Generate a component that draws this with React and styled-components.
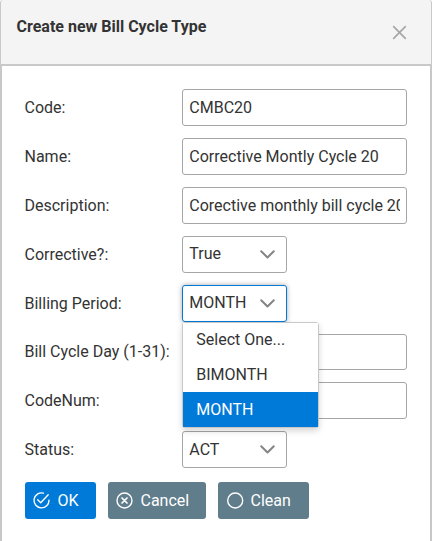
import React from "react";
import styled, { createGlobalStyle, css } from "styled-components";

const GlobalStyle = createGlobalStyle`
  *, *::before, *::after { box-sizing: border-box; }
  body {
    margin: 0;
    background: #fff;
    color: #333;
    font-family: Roboto, "Liberation Sans", sans-serif;
    font-size: 16px;
    line-height: 19px;
    overflow: hidden;
  }
`;

const Dialog = styled.div`
  display: flex;
  flex-direction: column;
  width: 432px;
  height: 541px;
`;

const Header = styled.header`
  display: flex;
  justify-content: space-between;
  height: 64px;
  padding: 17px 24px 0 15.5px;
  background: #f4f4f4;
  border: solid #c8c8c8;
  border-width: 0 1px;
  border-radius: 3px 3px 0 0;
`;

const Title = styled.h1`
  margin: 0;
  font-size: 16px;
  line-height: 19px;
  font-weight: 700;
  color: #333;
`;

const CloseButton = styled.button`
  display: flex;
  width: 15px;
  height: 15px;
  margin-top: 8px;
  padding: 0;
  border: 0;
  background: none;
  color: #a6a6a6;
`;

const Body = styled.main`
  flex: 1;
  padding: 23px 23px 0;
  border: 2px solid #c8c8c8;
  border-bottom: 0;
`;

const Form = styled.form`
  display: grid;
  grid-template-columns: 157px 1fr;
  grid-template-rows: repeat(5, 49px) 48px 49px 37px;
`;

const Label = styled.label`
  padding-top: ${(p) => (p.$raised ? 8 : 9)}px;
  margin-left: -0.5px;
  white-space: nowrap;
`;

const control = css`
  height: 37px;
  background: #fff;
  border: 1px solid #a6a6a6;
  border-radius: 3px;
  color: #333;
  font: inherit;
`;

const Input = styled.input`
  ${control}
  width: 225px;
  height: ${(p) => (p.$short ? 36 : 37)}px;
  padding: 0 6px 0 6.3px;
  outline: 0;
`;

const SelectWrap = styled.div`
  position: relative;
  width: 105px;
  height: 37px;
`;

const Select = styled.div`
  ${control}
  display: flex;
  align-items: center;
  justify-content: space-between;
  padding: 0 11px ${(p) => (p.$lowered ? 0 : 2)}px 6.3px;
  ${(p) =>
    p.$open &&
    css`
      border-color: #007ad9;
      box-shadow: 0 0 5px #a6a6a6;
    `}
`;

const Menu = styled.ul`
  position: absolute;
  z-index: 1;
  top: 37px;
  left: 0;
  width: 137px;
  height: 106px;
  margin: 0;
  padding: 0;
  list-style: none;
  background: #fff;
  border: 1px solid #c8c8c8;
  border-radius: 3px;
  box-shadow: 0 3px 6px rgba(0, 0, 0, 0.16);
`;

const Option = styled.li`
  height: ${(p) => (p.$first ? 34 : 35)}px;
  padding: ${(p) => (p.$first ? 7 : 8)}px 13.3px;
  color: ${(p) => (p.$selected ? "#fff" : "#333")};
  background: ${(p) => (p.$selected ? "#007ad9" : "#fff")};
`;

const Actions = styled.div`
  display: flex;
  gap: 12px;
  margin-top: 14px;
`;

const Button = styled.button`
  display: flex;
  align-items: center;
  gap: 7.5px;
  width: ${(p) => p.$width}px;
  height: 37px;
  padding: 0 0 0 8px;
  border: 0;
  border-radius: 3px;
  background: ${(p) => (p.$primary ? "#007ad9" : "#607d8b")};
  color: #fff;
  font: inherit;
`;

const Icon = styled.svg`
  flex: none;
  overflow: visible;
  fill: none;
  stroke: currentColor;
  stroke-width: ${(p) => p.$weight || 1.4};
  stroke-linecap: round;
  stroke-linejoin: round;
`;

const Chevron = styled(Icon)`
  margin-top: ${(p) => (p.$lowered ? 0 : 1)}px;
  color: #848484;
`;

const CheckIcon = () => (
  <Icon width="17" height="17" viewBox="0 0 17 17">
    <path d="M10.4 1.1A7.5 7.5 0 1 0 16 8.2M4.7 7.7l3 3L15.2 2.7" />
  </Icon>
);

const CancelIcon = () => (
  <Icon width="17" height="17" viewBox="0 0 17 17">
    <circle cx="8.5" cy="8.5" r="7.5" />
    <path d="m6 6 5 5m0-5-5 5" strokeWidth="1.7" />
  </Icon>
);

const CircleIcon = () => (
  <Icon width="17" height="17" viewBox="0 0 17 17">
    <circle cx="9.2" cy="8.5" r="7.5" />
  </Icon>
);

const options = ["Select One...", "BIMONTH", "MONTH"];

function Dropdown({ value, open, lowered }) {
  return (
    <SelectWrap>
      <Select $open={open} $lowered={lowered}>
        <span>{value}</span>
        <Chevron
          width="15"
          height="9"
          viewBox="0 0 15 9"
          $weight={2}
          $lowered={lowered}
        >
          <path d="m1.2 1.2 6.3 6.3 6.3-6.3" />
        </Chevron>
      </Select>
      {open && (
        <Menu>
          {options.map((o, i) => (
            <Option key={o} $first={i === 0} $selected={o === value}>
              {o}
            </Option>
          ))}
        </Menu>
      )}
    </SelectWrap>
  );
}

export default function App() {
  return (
    <>
      <GlobalStyle />
      <Dialog>
        <Header>
          <Title>Create new Bill Cycle Type</Title>
          <CloseButton aria-label="Close">
            <Icon width="15" height="15" viewBox="0 0 15 15" $weight={1.7}>
              <path d="m1.7 1.7 11.6 11.6m0-11.6L1.7 13.3" />
            </Icon>
          </CloseButton>
        </Header>
        <Body>
          <Form>
            <Label>Code:</Label>
            <Input defaultValue="CMBC20" />
            <Label>Name:</Label>
            <Input defaultValue="Corrective Montly Cycle 20" />
            <Label>Description:</Label>
            <Input defaultValue="Corective monthly bill cycle 20" />
            <Label>Corrective?:</Label>
            <Dropdown value="True" />
            <Label>Billing Period:</Label>
            <Dropdown value="MONTH" open />
            <Label $raised>Bill Cycle Day (1-31):</Label>
            <Input $short />
            <Label>CodeNum:</Label>
            <Input />
            <Label>Status:</Label>
            <Dropdown value="ACT" lowered />
          </Form>
          <Actions>
            <Button $primary $width={71}>
              <CheckIcon />
              OK
            </Button>
            <Button $width={98}>
              <CancelIcon />
              Cancel
            </Button>
            <Button $width={91}>
              <CircleIcon />
              Clean
            </Button>
          </Actions>
        </Body>
      </Dialog>
    </>
  );
}
